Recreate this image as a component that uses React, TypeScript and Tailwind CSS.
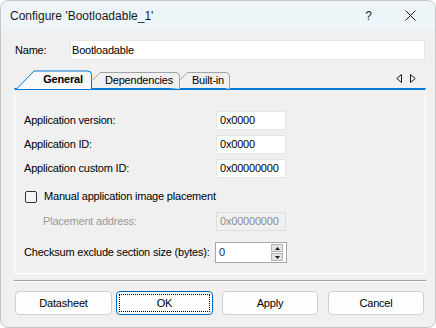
import React from "react";

function TextField({ value, disabled }: { value: string; disabled?: boolean }) {
  return (
    <div
      className={
        disabled
          ? "w-[70px] h-[19px] border border-[#dedede] bg-[#f0f0f0] text-[#8d8d8d] pl-[3px] flex items-center"
          : "w-[70px] h-[19px] border border-[#e6e6e6] bg-white text-black pl-[3px] flex items-center"
      }
    >
      {value}
    </div>
  );
}

function FieldRow({ label, value }: { label: string; value: string }) {
  return (
    <div className="flex items-center">
      <div className="w-[192px]">{label}</div>
      <TextField value={value} />
    </div>
  );
}

function Tab({
  label,
  width,
  height,
  slant,
  active,
  padLeft,
}: {
  label: string;
  width: number;
  height: number;
  slant: number;
  active?: boolean;
  padLeft: string;
}) {
  const w = width;
  const h = height;
  // outline of a slanted tab, left edge angled, right corner rounded
  const d = active
    ? `M0.5 ${h + 1} L${slant} 1 L${w - 4} 1 Q${w - 0.5} 1 ${w - 0.5} 4.5 L${w - 0.5} ${h + 1}`
    : `M0.5 ${slant + 0.5} L${slant} 0.5 L${w - 4} 0.5 Q${w - 0.5} 0.5 ${w - 0.5} 4 L${w - 0.5} ${h + 1}`;
  return (
    <div
      className={`relative flex items-center justify-center shrink-0 ${padLeft} ${active ? "z-10 font-bold" : ""}`}
      style={{ width: w, height: h }}
    >
      <svg className="absolute inset-0 overflow-visible" width={w} height={h} viewBox={`0 0 ${w} ${h}`}>
        <path
          d={d}
          fill={active ? "#f9f9f9" : "#f0f0f0"}
          stroke={active ? "#0078d7" : "#a3a3a3"}
          strokeWidth="1"
        />
      </svg>
      <span className="relative">{label}</span>
    </div>
  );
}

function Button({ label, focused, width }: { label: string; focused?: boolean; width: string }) {
  return (
    <div
      className={
        focused
          ? `${width} h-[24px] rounded-[4px] border border-[#0067c0] bg-[#fdfdfd] p-[2px]`
          : `${width} h-[24px] rounded-[4px] border border-[#d0d0d0] bg-[#fdfdfd] flex items-center justify-center`
      }
    >
      {focused ? (
        <div className="w-full h-full border border-dotted border-black flex items-center justify-center">
          {label}
        </div>
      ) : (
        label
      )}
    </div>
  );
}

export default function App() {
  return (
    <div className="w-[436px] h-[328px] bg-white">
      <div className="w-[436px] h-[328px] rounded-[8px] border border-[#c4c4c4] bg-[#f0f0f0] overflow-hidden flex flex-col font-['Liberation_Sans',Arial,sans-serif] text-[11px] tracking-[-0.2px] text-black">
        {/* Title bar */}
        <div className="h-[29px] bg-[#eef5f8] flex items-center pl-[9px] shrink-0">
          <span className="text-[12px] tracking-normal text-[#1b1b1b]">Configure 'Bootloadable_1'</span>
          <span className="ml-auto text-[12px] tracking-normal text-[#1b1b1b]">?</span>
          <svg className="ml-[33px] mr-[19px]" width="11" height="11" viewBox="0 0 11 11">
            <path d="M0.5 0.5 L10.5 10.5 M10.5 0.5 L0.5 10.5" stroke="#1b1b1b" strokeWidth="1" />
          </svg>
        </div>

        <div className="flex flex-col pl-[13px] pr-[9px]">
          {/* Name row */}
          <div className="flex items-center mt-[10px]">
            <div className="w-[56px] pl-[1px]">Name:</div>
            <div className="flex-1 h-[20px] bg-white border border-[#e6e6e6] pl-[1px] flex items-center mr-[1px]">
              Bootloadable
            </div>
          </div>

          {/* Tab strip */}
          <div className="flex items-end h-[18px] mt-[10px]">
            <div className="ml-[2px]" />
            <Tab label="General" width={76} height={18} slant={18} active padLeft="pl-[18px]" />
            <Tab label="Dependencies" width={88} height={16} slant={8} padLeft="pl-[6px]" />
            <Tab label="Built-in" width={50} height={16} slant={7} padLeft="pl-[6px]" />
            <div className="ml-auto h-[18px] flex items-center gap-[8px] mr-[10px] pb-[1px]">
              <svg width="6" height="9" viewBox="0 0 6 9">
                <path d="M5.5 0.5 L0.8 4.5 L5.5 8.5 Z" fill="none" stroke="#1b1b1b" strokeWidth="1" />
              </svg>
              <svg width="6" height="9" viewBox="0 0 6 9">
                <path d="M0.5 0.5 L5.2 4.5 L0.5 8.5 Z" fill="none" stroke="#1b1b1b" strokeWidth="1" />
              </svg>
            </div>
          </div>

          {/* Tab panel */}
          <div className="border-t-2 border-t-[#0078d7] border-l border-r border-b border-[#ffffff] bg-[#f0f0f0] pt-[21px] pb-[10px] pl-[9px] flex flex-col">
            <div className="flex flex-col gap-[5px]">
              <FieldRow label="Application version:" value="0x0000" />
              <FieldRow label="Application ID:" value="0x0000" />
              <FieldRow label="Application custom ID:" value="0x00000000" />
            </div>

            <div className="flex items-center mt-[12px] h-[13px]">
              <div className="ml-[1px] w-[12px] h-[12px] rounded-[2px] border border-[#333333] bg-[#f6f6f6]" />
              <span className="ml-[7px]">Manual application image placement</span>
            </div>

            <div className="flex items-center mt-[9px]">
              <div className="w-[192px] pl-[19px] text-[#9a9a9a]">Placement address:</div>
              <TextField value="0x00000000" disabled />
            </div>

            <div className="flex items-center mt-[11px]">
              <div className="w-[191px]">Checksum exclude section size (bytes):</div>
              <div className="w-[72px] h-[21px] border border-[#a6a6a6] bg-white flex items-center pl-[3px] pr-[3px]">
                <span className="text-[#0a2a66]">0</span>
                <div className="ml-auto w-[12px] h-[17px] flex flex-col gap-[1px]">
                  <div className="flex-1 bg-[#e3e3e3] border border-[#b4b4b4] flex items-center justify-center">
                    <svg width="5" height="3" viewBox="0 0 5 3">
                      <path d="M0 3 L2.5 0 L5 3 Z" fill="#1b1b1b" />
                    </svg>
                  </div>
                  <div className="flex-1 bg-[#e3e3e3] border border-[#b4b4b4] flex items-center justify-center">
                    <svg width="5" height="3" viewBox="0 0 5 3">
                      <path d="M0 0 L2.5 3 L5 0 Z" fill="#1b1b1b" />
                    </svg>
                  </div>
                </div>
              </div>
            </div>
          </div>

          {/* Separator */}
          <div className="mt-[6px] border-t border-[#a0a0a0] border-b border-b-white" />

          {/* Buttons */}
          <div className="flex mt-[9px]">
            <div className="ml-[1px]">
              <Button label="Datasheet" width="w-[97px]" />
            </div>
            <div className="ml-[4px]">
              <Button label="OK" focused width="w-[97px]" />
            </div>
            <div className="ml-[9px]">
              <Button label="Apply" width="w-[96px]" />
            </div>
            <div className="ml-[10px]">
              <Button label="Cancel" width="w-[96px]" />
            </div>
          </div>
        </div>
      </div>
    </div>
  );
}
